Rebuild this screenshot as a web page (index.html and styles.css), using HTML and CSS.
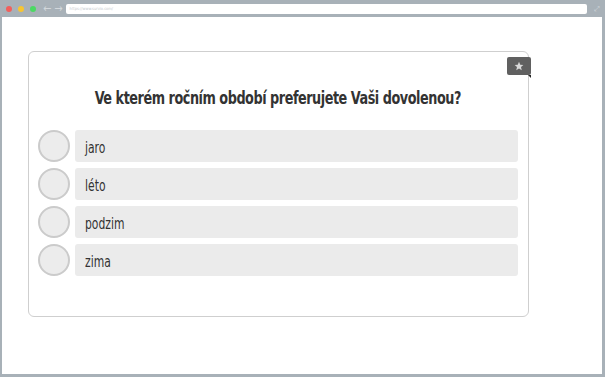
FILE: index.html
```html
<!DOCTYPE html>
<html>

<head>
  <title>Anketa</title>
  <meta charset="UTF-8">
  <link rel="stylesheet" href="styles.css">
</head>

<body>
  <div class="browser">
    <div class="topBar">
      <span class="dot red"></span>
      <span class="dot yellow"></span>
      <span class="dot green"></span>
      <span class="arrow">&#8592;</span>
      <span class="arrow">&#8594;</span>
      <div class="urlBar">https://www.survio.com/</div>
      <span class="expand">&#10530;</span>
    </div>
    <div class="page">
      <div class="card">
        <div class="badge">
          <svg width="10" height="10" viewBox="0 0 24 24"><path d="M12 2l3 7 7.5.6-5.7 5 1.8 7.4L12 18l-6.6 4 1.8-7.4-5.7-5L9 9z" fill="#d8d8d8"/></svg>
        </div>
        <h1 class="question"><span class="narrow">Ve kterém ročním období preferujete Vaši dovolenou?</span></h1>
        <div class="options">
          <div class="option"><span class="radio"></span><div class="label"><span class="narrow">jaro</span></div></div>
          <div class="option"><span class="radio"></span><div class="label"><span class="narrow">léto</span></div></div>
          <div class="option"><span class="radio"></span><div class="label"><span class="narrow">podzim</span></div></div>
          <div class="option"><span class="radio"></span><div class="label"><span class="narrow">zima</span></div></div>
        </div>
      </div>
    </div>
  </div>
</body>

</html>
```

FILE: styles.css
```css
body {
  margin: 0;
  font-family: "DejaVu Sans Condensed", "Liberation Sans", sans-serif;
  font-stretch: condensed;
}

.browser {
  width: 605px;
  height: 377px;
  box-sizing: border-box;
  background-color: #a8b1b8;
  padding: 0 3px 3px 2px;
  display: flex;
  flex-direction: column;
}

.topBar {
  height: 17px;
  display: flex;
  align-items: center;
  padding-left: 4px;
}

.dot {
  width: 6px;
  height: 6px;
  border-radius: 50%;
  margin-right: 6px;
}

.red { background-color: #f25f5c; }
.yellow { background-color: #f7c531; }
.green { background-color: #4cd964; }

.arrow {
  color: #d2d7db;
  font-size: 11px;
  line-height: 10px;
  margin-left: 1px;
  margin-right: 2px;
}

.urlBar {
  margin-left: 1px;
  width: 521px;
  height: 10px;
  background-color: #fff;
  border-radius: 2px;
  font-size: 4px;
  color: #c4c9cd;
  line-height: 10px;
  padding-left: 4px;
  box-sizing: border-box;
}

.expand {
  color: #d2d7db;
  font-size: 7px;
  margin-left: 7px;
}

.page {
  flex: 1;
  background-color: #fff;
  padding: 34px 0 0 26px;
}

.card {
  position: relative;
  width: 501px;
  height: 266px;
  box-sizing: border-box;
  border: 1px solid #cfcfcf;
  border-radius: 6px;
  padding: 0 10px 0 9px;
}

.badge {
  position: absolute;
  top: 5px;
  right: -3px;
  width: 24px;
  height: 18px;
  background-color: #606060;
  border-radius: 2px;
  display: flex;
  align-items: center;
  justify-content: center;
}

.badge::after {
  content: "";
  position: absolute;
  right: 0;
  bottom: -3px;
  border-top: 3px solid #222;
  border-left: 3px solid transparent;
}

/* no narrow font installed, squeeze the condensed one */
.narrow {
  display: inline-block;
  transform: scaleX(0.8);
  transform-origin: left center;
}

.question {
  margin: 0;
  padding-top: 35px;
  height: 43px;
  text-align: center;
  white-space: nowrap;
  font-size: 18.5px;
  font-weight: bold;
  color: #333;
  letter-spacing: -0.6px;
}

.question .narrow {
  transform: scaleX(0.77);
  transform-origin: center center;
}

.options {
  display: flex;
  flex-direction: column;
  gap: 6px;
}

.option {
  display: flex;
  gap: 5px;
}

.radio {
  width: 32px;
  height: 32px;
  box-sizing: border-box;
  border: 2px solid #cbcbcb;
  border-radius: 50%;
  background-color: #ececec;
}

.label {
  flex: 1;
  height: 32px;
  box-sizing: border-box;
  background-color: #ebebeb;
  border-radius: 3px;
  padding: 2px 0 0 10px;
  line-height: 32px;
  font-size: 15px;
  color: #333;
}
```
